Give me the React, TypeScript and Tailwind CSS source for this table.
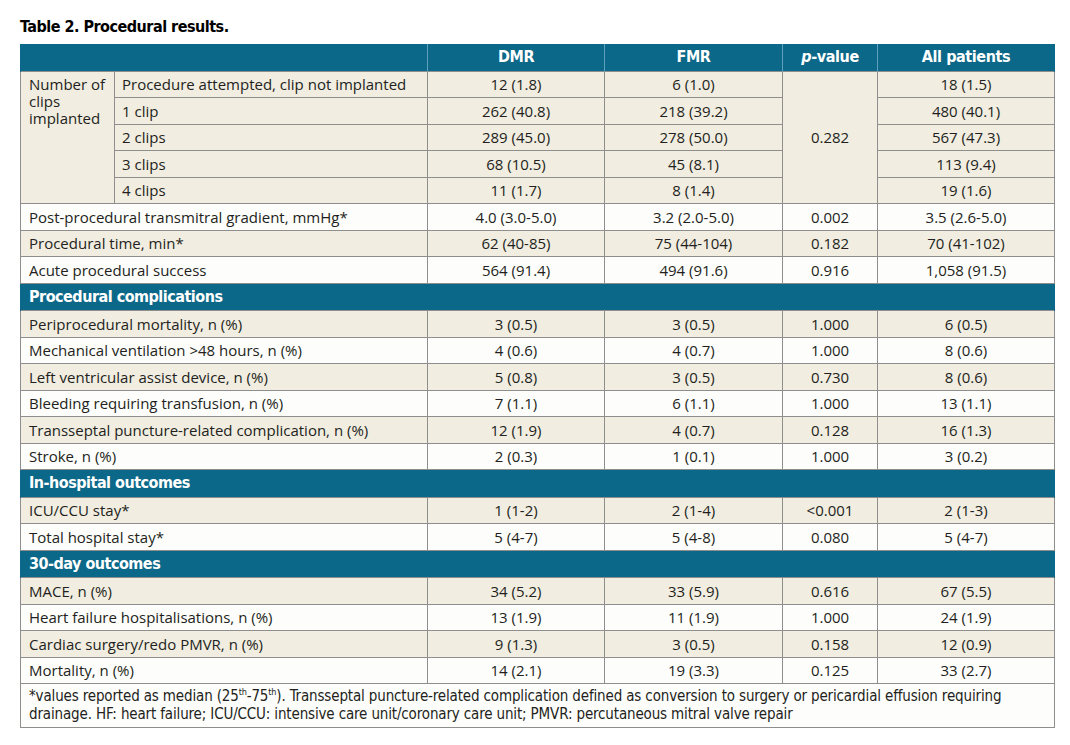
import React from 'react';

const BEIGE = 'bg-[#f1ede1]';
const WHITE = 'bg-[#fdfdfb]';

type Row = { label: string; dmr: string; fmr: string; p: string; all: string };

const mainRows: Row[] = [
  { label: 'Post-procedural transmitral gradient, mmHg*', dmr: '4.0 (3.0-5.0)', fmr: '3.2 (2.0-5.0)', p: '0.002', all: '3.5 (2.6-5.0)' },
  { label: 'Procedural time, min*', dmr: '62 (40-85)', fmr: '75 (44-104)', p: '0.182', all: '70 (41-102)' },
  { label: 'Acute procedural success', dmr: '564 (91.4)', fmr: '494 (91.6)', p: '0.916', all: '1,058 (91.5)' },
];

const sections: { title: string; rows: Row[] }[] = [
  {
    title: 'Procedural complications',
    rows: [
      { label: 'Periprocedural mortality, n (%)', dmr: '3 (0.5)', fmr: '3 (0.5)', p: '1.000', all: '6 (0.5)' },
      { label: 'Mechanical ventilation >48 hours, n (%)', dmr: '4 (0.6)', fmr: '4 (0.7)', p: '1.000', all: '8 (0.6)' },
      { label: 'Left ventricular assist device, n (%)', dmr: '5 (0.8)', fmr: '3 (0.5)', p: '0.730', all: '8 (0.6)' },
      { label: 'Bleeding requiring transfusion, n (%)', dmr: '7 (1.1)', fmr: '6 (1.1)', p: '1.000', all: '13 (1.1)' },
      { label: 'Transseptal puncture-related complication, n (%)', dmr: '12 (1.9)', fmr: '4 (0.7)', p: '0.128', all: '16 (1.3)' },
      { label: 'Stroke, n (%)', dmr: '2 (0.3)', fmr: '1 (0.1)', p: '1.000', all: '3 (0.2)' },
    ],
  },
  {
    title: 'In-hospital outcomes',
    rows: [
      { label: 'ICU/CCU stay*', dmr: '1 (1-2)', fmr: '2 (1-4)', p: '<0.001', all: '2 (1-3)' },
      { label: 'Total hospital stay*', dmr: '5 (4-7)', fmr: '5 (4-8)', p: '0.080', all: '5 (4-7)' },
    ],
  },
  {
    title: '30-day outcomes',
    rows: [
      { label: 'MACE, n (%)', dmr: '34 (5.2)', fmr: '33 (5.9)', p: '0.616', all: '67 (5.5)' },
      { label: 'Heart failure hospitalisations, n (%)', dmr: '13 (1.9)', fmr: '11 (1.9)', p: '1.000', all: '24 (1.9)' },
      { label: 'Cardiac surgery/redo PMVR, n (%)', dmr: '9 (1.3)', fmr: '3 (0.5)', p: '0.158', all: '12 (0.9)' },
      { label: 'Mortality, n (%)', dmr: '14 (2.1)', fmr: '19 (3.3)', p: '0.125', all: '33 (2.7)' },
    ],
  },
];

const clipRows = [
  { label: 'Procedure attempted, clip not implanted', dmr: '12 (1.8)', fmr: '6 (1.0)', all: '18 (1.5)' },
  { label: '1 clip', dmr: '262 (40.8)', fmr: '218 (39.2)', all: '480 (40.1)' },
  { label: '2 clips', dmr: '289 (45.0)', fmr: '278 (50.0)', all: '567 (47.3)' },
  { label: '3 clips', dmr: '68 (10.5)', fmr: '45 (8.1)', all: '113 (9.4)' },
  { label: '4 clips', dmr: '11 (1.7)', fmr: '8 (1.4)', all: '19 (1.6)' },
];

const cell = 'border border-[#8e8e8e] h-[26.5px] p-0 align-middle';
const num = `${cell} text-center`;
const head = 'h-[27px] p-0 text-center text-white font-bold text-[16px] tracking-[-0.4px] border-x border-[#5f9fbb]';
const narrow = { fontFamily: '"Liberation Sans Narrow", "DejaVu Sans Condensed", "Liberation Sans", sans-serif' };

const DataRow = ({ row, bg }: { row: Row; bg: string }) => (
  <tr className={bg}>
    <td colSpan={2} className={`${cell} pl-2 text-left`}>{row.label}</td>
    <td className={num}>{row.dmr}</td>
    <td className={num}>{row.fmr}</td>
    <td className={num}>{row.p}</td>
    <td className={num}>{row.all}</td>
  </tr>
);

const SectionHead = ({ title }: { title: string }) => (
  <tr className="bg-[#0c6888]">
    <td colSpan={6} className="h-[27.5px] p-0 pl-2 text-left text-white font-bold text-[16px] tracking-[-0.5px] border-x border-[#0c6888]" style={narrow}>
      {title}
    </td>
  </tr>
);

const Th = () => <span className="inline-block align-top text-[9px] leading-[10px]">th</span>;

export default function App() {
  return (
    <div className="w-[1070px] h-[745px] bg-white text-[#231f20]" style={{ fontFamily: '"Open Sans", "Noto Sans", sans-serif' }}>
      <div className="pl-5 pt-[16px] h-[44px]">
        <h1 className="text-[16px] leading-[22px] tracking-[-0.5px] font-bold text-black" style={narrow}>
          Table 2. Procedural results.
        </h1>
      </div>
      <table className="ml-5 w-[1034px] table-fixed border-collapse text-[15px] leading-[18px]">
        <colgroup>
          <col className="w-[94px]" />
          <col className="w-[313px]" />
          <col className="w-[177px]" />
          <col className="w-[178px]" />
          <col className="w-[95px]" />
          <col className="w-[177px]" />
        </colgroup>
        <thead>
          <tr className="bg-[#0c6888]" style={narrow}>
            <th colSpan={2} className={`${head} border-l-[#0c6888]`}></th>
            <th className={head}>DMR</th>
            <th className={head}>FMR</th>
            <th className={head}>
              <span className="italic">p</span>-value
            </th>
            <th className={`${head} border-r-[#0c6888]`}>All patients</th>
          </tr>
        </thead>
        <tbody>
          {clipRows.map((r, i) => (
            <tr key={r.label} className={BEIGE}>
              {i === 0 && (
                <td rowSpan={5} className="border border-[#8e8e8e] p-0 pl-2 pt-[4px] align-top text-left leading-[17px]">
                  Number of<br />clips<br />implanted
                </td>
              )}
              <td className={`${cell} pl-[7px] text-left`}>{r.label}</td>
              <td className={num}>{r.dmr}</td>
              <td className={num}>{r.fmr}</td>
              {i === 0 && (
                <td rowSpan={5} className="border border-[#8e8e8e] p-0 text-center align-middle">
                  0.282
                </td>
              )}
              <td className={num}>{r.all}</td>
            </tr>
          ))}
          {mainRows.map((r, i) => (
            <DataRow key={r.label} row={r} bg={i % 2 === 0 ? WHITE : BEIGE} />
          ))}
          {sections.map((s) => (
            <React.Fragment key={s.title}>
              <SectionHead title={s.title} />
              {s.rows.map((r, i) => (
                <DataRow key={r.label} row={r} bg={i % 2 === 0 ? BEIGE : WHITE} />
              ))}
            </React.Fragment>
          ))}
          <tr className={WHITE}>
            <td colSpan={6} className="border border-[#8e8e8e] h-[43px] pl-2 pr-2 pt-[3px] pb-[4px] text-left align-top text-[15px] leading-[18px] tracking-[-0.15px]" style={narrow}>
              *values reported as median (25<Th />-75<Th />). Transseptal puncture-related complication defined as conversion to surgery or pericardial effusion requiring drainage. HF: heart failure; ICU/CCU: intensive care unit/coronary care unit; PMVR: percutaneous mitral valve repair
            </td>
          </tr>
        </tbody>
      </table>
    </div>
  );
}
